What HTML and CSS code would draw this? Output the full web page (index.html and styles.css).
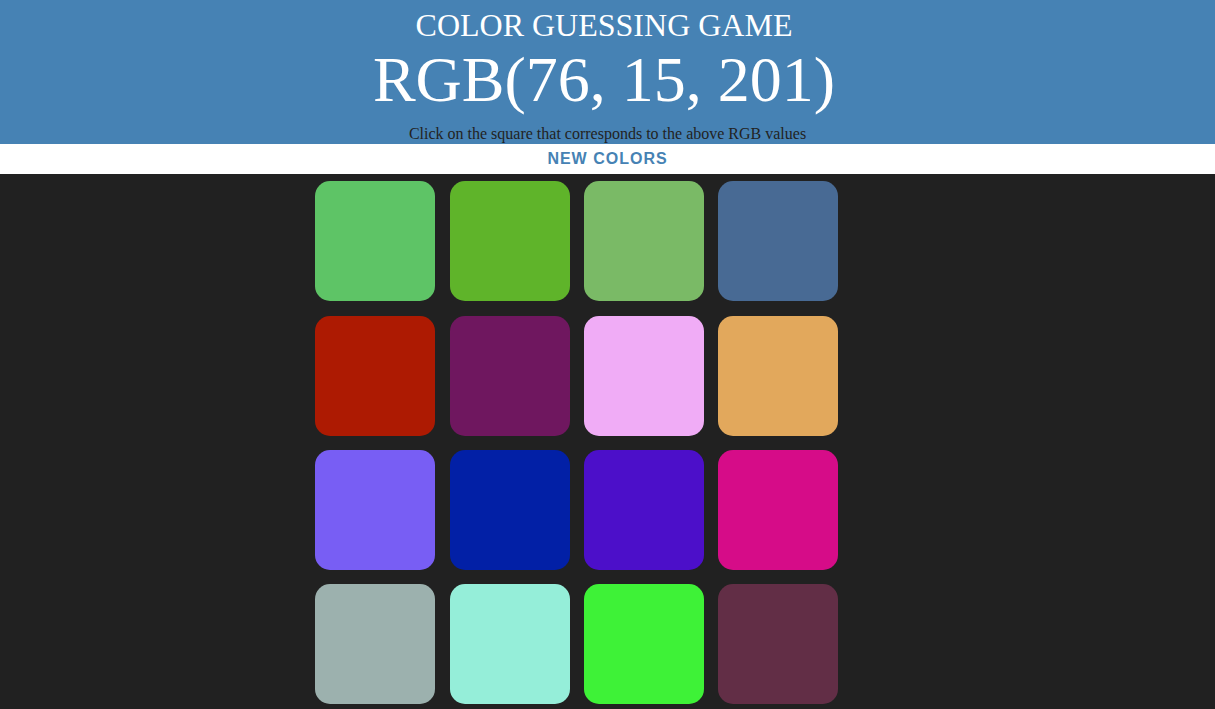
FILE: index.html
```html
<!DOCTYPE html>
<html>
<head>
<meta charset="utf-8">
<title>Color Guessing Game</title>
<link rel="stylesheet" href="styles.css">
</head>
<body>
<header class="header">
  <h1 class="heading">
    <span class="title">Color Guessing Game</span>
    <span class="rgb">RGB(76, 15, 201)</span>
  </h1>
  <p class="hint">Click on the square that corresponds to the above RGB values</p>
</header>
<div class="bar">
  <button class="new-btn">NEW COLORS</button>
</div>
<main class="board">
  <div class="grid">
    <div class="square" style="background:#5ec466"></div>
    <div class="square" style="background:#5fb42a"></div>
    <div class="square" style="background:#7aba66"></div>
    <div class="square" style="background:#486a94"></div>
    <div class="square" style="background:#ad1a02"></div>
    <div class="square" style="background:#6f175f"></div>
    <div class="square" style="background:#f0acf6"></div>
    <div class="square" style="background:#e2a85c"></div>
    <div class="square" style="background:#785ef4"></div>
    <div class="square" style="background:#0220a6"></div>
    <div class="square" style="background:#4c0fc9"></div>
    <div class="square" style="background:#d60c88"></div>
    <div class="square" style="background:#9cb1ae"></div>
    <div class="square" style="background:#95eed9"></div>
    <div class="square" style="background:#3ef237"></div>
    <div class="square" style="background:#622e46"></div>
  </div>
</main>
</body>
</html>
```
FILE: styles.css
```css
html, body {
  margin: 0;
  padding: 0;
}
body {
  background: #212121;
  font-family: "Liberation Serif", "Times New Roman", serif;
  min-height: 709px;
}
.header {
  background: #4682b4;
  color: #fff;
  text-align: center;
  height: 144px;
  overflow: hidden;
}
.heading {
  margin: 0;
  padding-right: 7px;
  font-weight: normal;
}
.title {
  display: block;
  font-size: 32px;
  line-height: 40px;
  padding-top: 5px;
  text-transform: uppercase;
}
.rgb {
  display: block;
  font-size: 64px;
  line-height: 70px;
}
.hint {
  margin: 0;
  padding-top: 9px;
  font-size: 16px;
  line-height: 20px;
  color: #222;
}
.bar {
  background: #fff;
  height: 30px;
  display: flex;
  justify-content: center;
  align-items: center;
}
.new-btn {
  background: none;
  border: none;
  padding: 0;
  font-family: "Liberation Sans", Arial, sans-serif;
  font-weight: bold;
  font-size: 16px;
  letter-spacing: 1px;
  color: #4682b4;
  cursor: pointer;
}
.board {
  max-width: 600px;
  margin: 0 auto;
}
.grid {
  display: grid;
  grid-template-columns: 135px 134px 134px 120px;
  grid-template-rows: 135px 134px 134px 120px;
  padding: 7px 7.5px;
}
.square {
  width: 120px;
  height: 120px;
  border-radius: 15px;
}
```
